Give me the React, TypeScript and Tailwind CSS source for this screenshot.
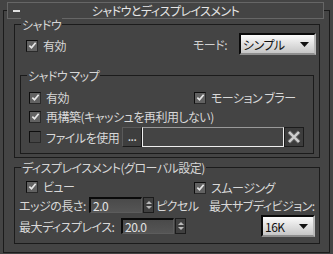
import React from "react";

const font = "font-['Noto_Sans_CJK_JP','Noto_Sans',sans-serif] [font-feature-settings:'palt'] tracking-[-0.5px]";

function Check({ checked }: { checked?: boolean }) {
  return (
    <span
      className={`flex h-[12px] w-[12px] shrink-0 items-center justify-center border border-t-[#0e0e0e] border-l-[#0e0e0e] border-r-[#2a2a2a] border-b-[#2a2a2a] ${
        checked ? "bg-[#626262]" : "bg-[#454545]"
      }`}
    >
      {checked && (
        <svg viewBox="0 0 10 10" className="h-[9px] w-[9px]" aria-hidden="true">
          <path d="M1.5 5.2l2.4 2.4 4.6-5.6" fill="none" stroke="#e8e8e8" strokeWidth={1.9} />
        </svg>
      )}
    </span>
  );
}

function CheckItem({ label, checked, className = "" }: { label: string; checked?: boolean; className?: string }) {
  return (
    <div className={`flex items-center gap-[5px] ${className}`}>
      <Check checked={checked} />
      <span className="whitespace-nowrap">{label}</span>
    </div>
  );
}

function Combo({ value, className = "" }: { value: string; className?: string }) {
  return (
    <div
      className={`flex items-center border-2 border-t-[#0a0a0a] border-l-[#0a0a0a] border-r-[#b8b8b8] border-b-[#8e8e8e] bg-gradient-to-b from-[#fbfbfb] to-[#c6c6c6] pl-[2px] pr-[5px] text-[#111] ${className}`}
    >
      <span className="flex-1 whitespace-nowrap">{value}</span>
      <svg viewBox="0 0 9 5" className="h-[5px] w-[9px]" aria-hidden="true">
        <path d="M0 0h9L4.5 5z" fill="#111" />
      </svg>
    </div>
  );
}

function Field({ value, className = "" }: { value: string; className?: string }) {
  return (
    <div
      className={`flex h-[16px] items-center border-2 border-r border-b border-t-[#0a0a0a] border-l-[#0a0a0a] border-r-[#5c5c5c] border-b-[#5c5c5c] bg-gradient-to-b from-[#4a4a4a] to-[#555] pl-[2px] text-[#e4e4e4] ${className}`}
    >
      {value}
    </div>
  );
}

function Spinner() {
  return (
    <div className="flex h-[16px] w-[11px] shrink-0 flex-col items-center justify-center gap-[2px] border border-[#1c1c1c] bg-[#3f3f3f]">
      <svg viewBox="0 0 6 3" className="h-[3px] w-[6px]" aria-hidden="true">
        <path d="M0 3h6L3 0z" fill="#b9b9b9" />
      </svg>
      <svg viewBox="0 0 6 3" className="h-[3px] w-[6px]" aria-hidden="true">
        <path d="M0 0h6L3 3z" fill="#b9b9b9" />
      </svg>
    </div>
  );
}

function GroupLabel({ text }: { text: string }) {
  return (
    <div className="-mt-[8px] ml-[6px] h-[15px] w-fit bg-[#444444] px-[1px] leading-[15px] whitespace-nowrap text-[#d6d6d6]">
      {text}
    </div>
  );
}

export default function App() {
  return (
    <div className={`h-[254px] w-[333px] overflow-hidden bg-[#444444] pl-[3px] pt-[10px] text-[12px] leading-[15px] text-[#d8d8d8] ${font}`}>
      {/* rollout frame */}
      <div className="h-[243px] w-[327px] border border-[#1b1b1b]">
        {/* title bar */}
        <div className="-mt-[9px] ml-[3px] flex h-[17px] w-[317px] items-center border border-[#666666] bg-[#444444]">
          <span className="ml-[5px] h-[2px] w-[7px] bg-[#e0e0e0]" />
          <span className="flex-1 pr-[12px] text-center whitespace-nowrap text-[#e6e6e6]">シャドウとディスプレイスメント</span>
        </div>

        {/* シャドウ */}
        <div className="ml-[10px] mt-[5px] h-[134px] w-[306px] border border-[#1b1b1b]">
          <GroupLabel text="シャドウ" />
          <div className="mt-[1px] flex h-[22px] items-start">
            <CheckItem label="有効" checked className="ml-[11px] mt-[5px]" />
            <span className="ml-auto mt-[4px] whitespace-nowrap text-[#d0d0d0]">モード:</span>
            <Combo value="シンプル" className="ml-[12px] mr-[3px] h-[22px] w-[77px]" />
          </div>

          {/* シャドウ マップ */}
          <div className="ml-[5px] mt-[20px] h-[79px] w-[294px] border border-[#1b1b1b]">
            <GroupLabel text="シャドウ マップ" />
            <div className="mt-[5px] flex h-[19px] items-center">
              <CheckItem label="有効" checked className="ml-[8px] w-[165px]" />
              <CheckItem label="モーション ブラー" checked />
            </div>
            <div className="flex h-[19px] items-center">
              <CheckItem label="再構築(キャッシュを再利用しない)" checked className="ml-[8px]" />
            </div>
            <div className="mt-[1px] flex h-[20px] items-center">
              <CheckItem label="ファイルを使用" className="ml-[8px] w-[93px]" />
              <div className="flex h-[20px] w-[20px] items-center justify-center border border-t-[#5a5a5a] border-l-[#5a5a5a] border-r-[#1a1a1a] border-b-[#1a1a1a] bg-[#3e3e3e] pb-[3px] text-[#e0e0e0]">
                ...
              </div>
              <div className="h-[20px] w-[142px] border border-t-[#9a9a9a] border-l-[#f0f0f0] border-r-[#f0f0f0] border-b-[#f0f0f0] bg-[#444444]" />
              <div className="flex h-[20px] w-[20px] items-center justify-center border border-[#1c1c1c] bg-[#3d3d3d]">
                <svg viewBox="0 0 14 14" className="h-[14px] w-[14px]" aria-hidden="true">
                  <path d="M2 2l10 10M12 2L2 12" stroke="#6a6a6a" strokeWidth={4} />
                  <path d="M2 2l10 10M12 2L2 12" stroke="#d0d0d0" strokeWidth={2.4} />
                </svg>
              </div>
            </div>
          </div>
        </div>

        {/* ディスプレイスメント */}
        <div className="ml-[10px] mt-[9px] h-[77px] w-[306px] border border-[#1b1b1b]">
          <GroupLabel text="ディスプレイスメント(グローバル設定)" />
          <div className="mt-[2px] flex h-[19px] items-center">
            <CheckItem label="ビュー" checked className="ml-[11px] w-[168px]" />
            <CheckItem label="スムージング" checked className="mt-[2px]" />
          </div>
          <div className="mt-[1px] flex h-[16px] items-center">
            <span className="ml-[4px] w-[70px] whitespace-nowrap">エッジの長さ:</span>
            <Field value="2.0" className="w-[53px]" />
            <div className="ml-[1px]">
              <Spinner />
            </div>
            <span className="ml-[2px] w-[53px] whitespace-nowrap">ピクセル</span>
            <span className="whitespace-nowrap">最大サブディビジョン:</span>
          </div>
          <div className="mt-[2px] flex h-[22px] items-center">
            <span className="ml-[4px] w-[102px] whitespace-nowrap">最大ディスプレイス:</span>
            <Field value="20.0" className="w-[53px]" />
            <div className="ml-[1px]">
              <Spinner />
            </div>
            <Combo value="16K" className="ml-auto mr-[4px] h-[22px] w-[54px]" />
          </div>
        </div>
      </div>
    </div>
  );
}
